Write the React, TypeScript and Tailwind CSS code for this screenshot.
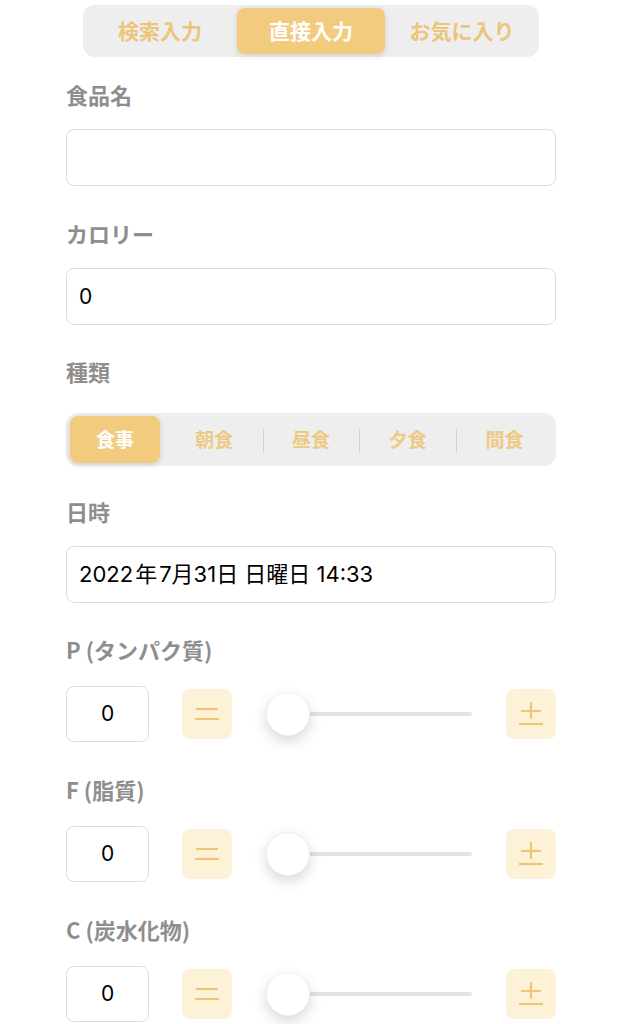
import React from "react";

const font = { fontFamily: '"Noto Sans CJK JP", "Noto Sans", sans-serif' };
const inputFont = { fontFamily: 'Inter, "Noto Sans CJK JP", sans-serif' };

const Label = ({ children }: { children: React.ReactNode }) => (
  <div className="h-7 text-[22px] font-bold leading-6 text-[#8e8e8e]">{children}</div>
);

const MinusIcon = () => (
  <svg width="26" height="16" viewBox="0 0 26 16">
    <line x1="2" y1="3" x2="24" y2="3" stroke="#eec577" strokeWidth="2.2" />
    <line x1="1" y1="13" x2="25" y2="13" stroke="#eec577" strokeWidth="2.2" />
  </svg>
);

const PlusIcon = () => (
  <svg width="26" height="26" viewBox="0 0 26 26">
    <line x1="13" y1="1" x2="13" y2="18" stroke="#eec577" strokeWidth="2.2" />
    <line x1="3" y1="10" x2="23" y2="10" stroke="#eec577" strokeWidth="2.2" />
    <line x1="1" y1="23" x2="25" y2="23" stroke="#eec577" strokeWidth="2.2" />
  </svg>
);

const NutrientRow = ({ label }: { label: string }) => (
  <div>
    <Label>{label}</Label>
    <div className="mt-[21px] flex h-[56px] items-center">
      <div
        className="flex h-[56px] w-[83px] items-center justify-center rounded-lg border border-[#dcdcdc] text-[21px] text-black"
        style={inputFont}
      >
        0
      </div>
      <button className="ml-[33px] flex h-[50px] w-[50px] items-center justify-center rounded-lg bg-[#fdf2d8]">
        <MinusIcon />
      </button>
      <div className="relative ml-[34px] mr-[34px] flex h-[50px] flex-1 items-center">
        <div className="ml-[22px] h-[4px] w-full rounded-full bg-[#e3e3e6]" />
        <div className="absolute left-0 top-[3px] h-[44px] w-[44px] rounded-full border border-[#f0f0f0] bg-white shadow-[0_5px_14px_rgba(0,0,0,0.16)]" />
      </div>
      <button className="flex h-[50px] w-[50px] items-center justify-center rounded-lg bg-[#fdf2d8]">
        <PlusIcon />
      </button>
    </div>
  </div>
);

export default function App() {
  const tabs = ["検索入力", "直接入力", "お気に入り"];
  const kinds = ["食事", "朝食", "昼食", "夕食", "間食"];
  return (
    <div className="min-h-screen w-[622px] bg-white" style={font}>
      <div className="px-[66px] pt-[5px]">
        <div className="mx-auto flex h-[52px] w-[456px] rounded-xl bg-[#eeeeef] p-[3px]">
          {tabs.map((t, i) => (
            <div
              key={t}
              className={
                i === 1
                  ? "mx-[3px] flex flex-1 items-center justify-center rounded-lg bg-[#f2cb7e] text-[21px] font-bold text-white shadow-[0_2px_6px_rgba(0,0,0,0.12)]"
                  : "flex flex-1 items-center justify-center text-[21px] font-bold text-[#ecc47a]"
              }
            >
              {t}
            </div>
          ))}
        </div>

        <div className="mt-[25px]">
          <Label>食品名</Label>
          <div className="mt-[19px] h-[57px] rounded-lg border border-[#dcdcdc]" />
        </div>

        <div className="mt-[35px]">
          <Label>カロリー</Label>
          <div
            className="mt-[19px] flex h-[57px] items-center rounded-lg border border-[#dcdcdc] px-3 text-[21px] text-black"
            style={inputFont}
          >
            0
          </div>
        </div>

        <div className="mt-[34px]">
          <Label>種類</Label>
          <div className="mt-[26px] flex h-[53px] rounded-xl bg-[#eeeeef] p-[3px]">
            {kinds.map((k, i) => (
              <div key={k} className="relative flex flex-1 items-center justify-center">
                {i > 1 && (
                  <div className="absolute left-0 top-[13px] h-[24px] w-px bg-[#d2d2d4]" />
                )}
                {i === 0 ? (
                  <div className="ml-[1px] mr-[6px] flex h-full w-full items-center justify-center rounded-lg bg-[#f2cb7e] text-[19px] font-bold text-white shadow-[0_2px_6px_rgba(0,0,0,0.12)]">
                    {k}
                  </div>
                ) : (
                  <span className="text-[19px] font-bold text-[#eec986]">{k}</span>
                )}
              </div>
            ))}
          </div>
        </div>

        <div className="mt-[33px]">
          <Label>日時</Label>
          <div
            className="mt-[19px] flex h-[57px] items-center rounded-lg border border-[#dcdcdc] px-3 text-[22px] text-black"
            style={inputFont}
          >
            2022<span className="mx-[2px]">年</span>7月31日 日曜日 14:33
          </div>
        </div>

        <div className="mt-[34px] flex flex-col gap-[35px]">
          <NutrientRow label="P (タンパク質)" />
          <NutrientRow label="F (脂質)" />
          <NutrientRow label="C (炭水化物)" />
        </div>
      </div>
    </div>
  );
}
